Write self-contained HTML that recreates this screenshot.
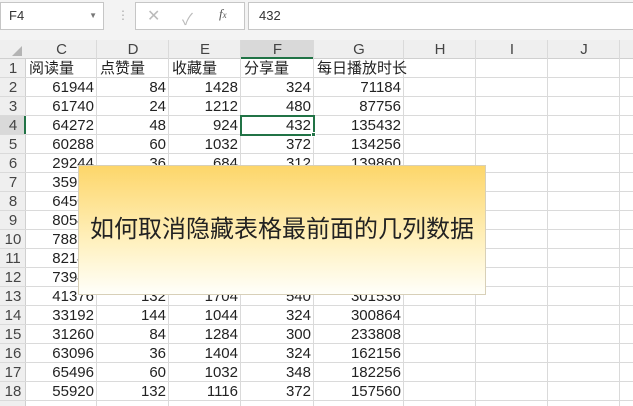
<!DOCTYPE html>
<html><head><meta charset="utf-8"><style>
body{margin:0;width:633px;height:406px;overflow:hidden;background:#fff;font-family:"Liberation Sans","Noto Sans CJK SC",sans-serif;position:relative}
.a{position:absolute;box-sizing:border-box}
.c{position:absolute;box-sizing:border-box;font-size:15px;line-height:19px;height:19px;white-space:nowrap;color:#222;padding:0 3px}
.r{text-align:right}
</style></head><body>
<div class="a" style="left:0;top:0;width:633px;height:40px;background:#f3f3f3"></div>
<div class="a" style="left:0;top:2px;width:104px;height:28px;background:#fff;border:1px solid #c6c6c6;font-size:13px;line-height:26px;padding-left:8px;color:#333">F4<span style="position:absolute;right:6px;top:0;font-size:8px;color:#777">▼</span></div>
<div class="a" style="left:117px;top:8px;font-size:12px;color:#aaa">⋮</div>
<div class="a" style="left:135px;top:2px;width:110px;height:28px;background:#fff;border:1px solid #c6c6c6"></div>
<div class="a" style="left:147px;top:6px;font-size:16px;color:#bbb">✕</div>
<div class="a" style="left:182px;top:6px;font-size:16px;color:#bbb">✓</div>
<div class="a" style="left:219px;top:6px;font-size:13px;color:#555;font-family:'Liberation Serif',serif;font-style:italic">f<span style="font-size:9px">x</span></div>
<div class="a" style="left:248px;top:2px;width:390px;height:28px;background:#fff;border:1px solid #c6c6c6;font-size:13px;line-height:26px;padding-left:10px;color:#333">432</div>
<div class="a" style="left:0;top:40px;width:633px;height:19px;background:#efefef;border-bottom:1px solid #d0d0d0"></div>
<div class="a" style="left:0;top:59px;width:26px;height:347px;background:#efefef;border-right:1px solid #d0d0d0"></div>
<div class="a" style="left:241px;top:40px;width:73px;height:19px;background:#d9d9d9;border-bottom:2px solid #217346"></div>
<div class="a" style="left:0;top:116px;width:26px;height:19px;background:#d9d9d9;border-right:2px solid #217346"></div>
<div class="a" style="left:12px;top:46px;width:0;height:0;border-left:10px solid transparent;border-bottom:10px solid #b4b4b4"></div>
<div id="g"></div>
<div class="a" style="left:240px;top:115px;width:75px;height:21px;border:2px solid #217346"></div>
<div class="a" style="left:311px;top:132px;width:5px;height:5px;background:#217346;border:1px solid #fff"></div>
<div class="a" style="left:78px;top:165px;width:408px;height:130px;background:linear-gradient(#fdd66a,#fff1c0 60%,#fffffa);border:1px solid #d8d0b8;font-size:24px;line-height:128px;text-align:center;color:#222">如何取消隐藏表格最前面的几列数据</div>
<script>
var cols=[26,97,169,241,314,404,476,548,620,700],names="CDEFGHIJ";
var h='';
for(var i=0;i<cols.length-1;i++){h+='<div class="a" style="left:'+(cols[i+1]-1)+'px;top:40px;width:1px;height:366px;background:#dadada"></div>';
if(i<8)h+='<div class="c" style="left:'+cols[i]+'px;top:40px;width:'+(cols[i+1]-cols[i])+'px;text-align:center;color:#444">'+names[i]+'</div>';}
var data=[["阅读量","点赞量","收藏量","分享量","每日播放时长"],[61944,84,1428,324,71184],[61740,24,1212,480,87756],[64272,48,924,432,135432],[60288,60,1032,372,134256],[29244,36,684,312,139860],[35964,48,852,300,150000],[64500,60,900,300,160000],[80544,72,1000,300,170000],[78876,84,1100,300,180000],[82140,96,1200,300,190000],[73944,108,1300,300,200000],[41376,132,1704,540,301536],[33192,144,1044,324,300864],[31260,84,1284,300,233808],[63096,36,1404,324,162156],[65496,60,1032,348,182256],[55920,132,1116,372,157560]];
for(var r=0;r<18;r++){var t=59+r*19;
h+='<div class="a" style="left:0;top:'+(t+18)+'px;width:633px;height:1px;background:#dadada"></div>';
h+='<div class="c" style="left:0;top:'+t+'px;width:26px;text-align:center;color:#444;padding:0">'+(r+1)+'</div>';
for(var c=0;c<5;c++){h+='<div class="c'+(r?' r':'')+'" style="left:'+cols[c]+'px;top:'+t+'px;width:'+(cols[c+1]-cols[c])+'px">'+data[r][c]+'</div>';}}
document.getElementById('g').innerHTML=h;
</script>
</body></html>
